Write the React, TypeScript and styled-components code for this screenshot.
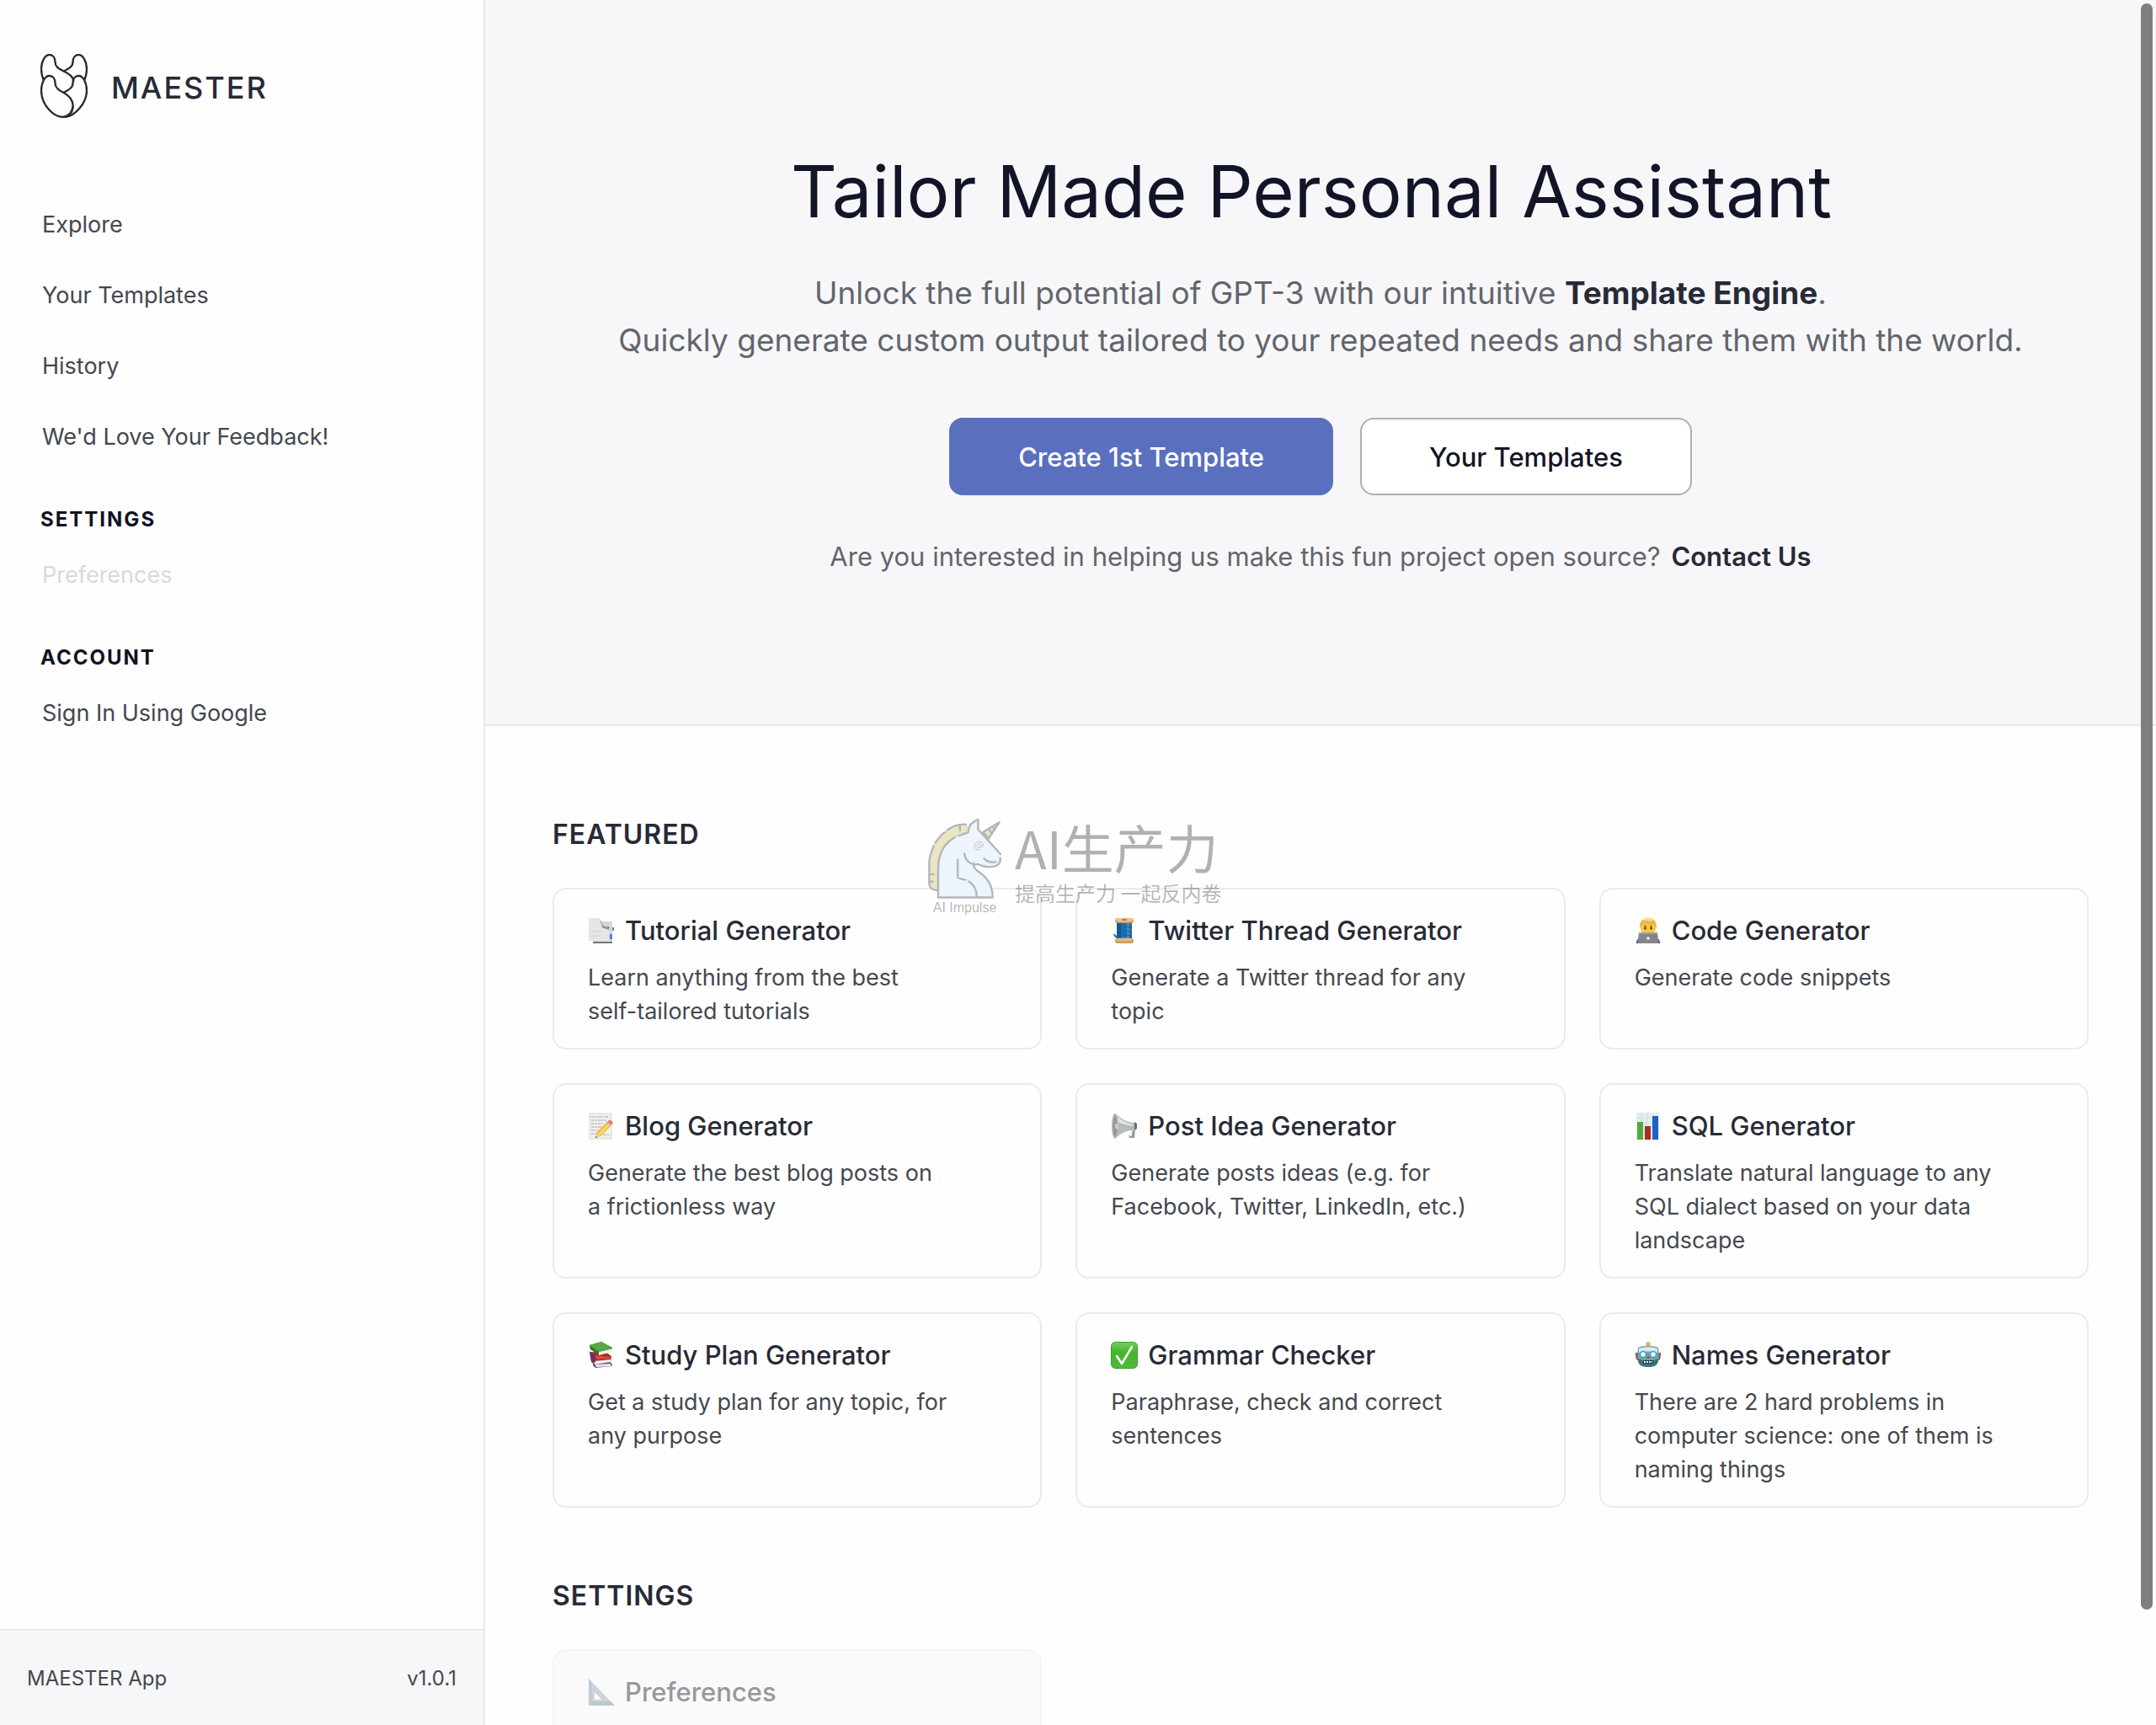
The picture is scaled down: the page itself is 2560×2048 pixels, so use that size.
import React from 'react';
import styled, { createGlobalStyle } from 'styled-components';

const GlobalStyle = createGlobalStyle`
  *, *::before, *::after { box-sizing: border-box; }
  html, body { margin: 0; height: 100%; }
  body {
    overflow: hidden;
    background: #fefefe;
    color: #272a36;
    font-family: Inter, 'Noto Sans CJK SC', sans-serif;
    -webkit-font-smoothing: antialiased;
  }
  h1, h2, h3, p, ul { margin: 0; padding: 0; }
  ul { list-style: none; }
  a { color: inherit; text-decoration: none; }
  button { font: inherit; cursor: pointer; }
`;

const Shell = styled.div`
  display: flex;
  height: 100vh;
`;

/* ---------- sidebar ---------- */

const Sidebar = styled.aside`
  display: flex;
  flex-direction: column;
  flex: 0 0 576px;
  border-right: 2px solid #e8e9eb;
`;

const Brand = styled.a`
  display: flex;
  align-items: center;
  gap: 28px;
  padding: 64px 48px 0;
`;

const BrandName = styled.span`
  padding-top: 4px;
  font-size: 36px;
  line-height: 48px;
  font-weight: 500;
  letter-spacing: 2px;
`;

const Nav = styled.nav`
  flex: 1;
  padding: 85px 48px 0;
`;

const NavHeading = styled.h2`
  margin-top: 32px;
  font-size: 24px;
  line-height: 48px;
  font-weight: 700;
  letter-spacing: 2px;
  color: #101322;
`;

const NavLink = styled.a<{ $muted?: boolean }>`
  display: block;
  padding: 0 2px;
  font-size: 27px;
  line-height: 84px;
  color: ${(p) => (p.$muted ? '#d9d9da' : '#44474e')};
`;

const SidebarFooter = styled.footer`
  display: flex;
  align-items: center;
  justify-content: space-between;
  height: 114px;
  padding: 0 32px;
  border-top: 2px solid #e8e9eb;
  background: #f7f7fa;
  font-size: 24px;
  color: #44474e;
`;

/* ---------- hero ---------- */

const Main = styled.main`
  position: relative;
  flex: 1;
  min-width: 0;
  overflow-y: auto;
  scrollbar-width: none;
`;

const Hero = styled.section`
  display: flex;
  flex-direction: column;
  align-items: center;
  padding: 180px 80px 175px;
  border-bottom: 2px solid #e8e9eb;
  background: #f7f7fa;
  text-align: center;
`;

const HeroTitle = styled.h1`
  padding-right: 22px;
  font-size: 85px;
  line-height: 96px;
  font-weight: 400;
  color: #121527;
`;

const HeroText = styled.p`
  margin-top: 44px;
  font-size: 37px;
  line-height: 56px;
  color: #62656b;

  strong {
    font-weight: 700;
    color: #272a36;
  }
`;

const Actions = styled.div`
  display: flex;
  gap: 32px;
  margin-top: 64px;
`;

const ActionButton = styled.button<{ $primary?: boolean }>`
  height: 92px;
  padding: 0 80px;
  border: 2px solid ${(p) => (p.$primary ? '#5a70bf' : '#b0b0b1')};
  border-radius: 16px;
  background: ${(p) => (p.$primary ? '#5a70bf' : '#fff')};
  color: ${(p) => (p.$primary ? '#fff' : '#121527')};
  font-size: 31px;
  font-weight: 500;
`;

const ContactLine = styled.p`
  margin-top: 49px;
  font-size: 31px;
  line-height: 48px;
  color: #62656b;

  a {
    margin-left: 4px;
    font-weight: 600;
    color: #272a36;
  }
`;

/* ---------- card grid ---------- */

const Content = styled.div`
  padding: 24px 80px 80px;
`;

const Section = styled.section`
  padding-top: 80px;
`;

const SectionTitle = styled.h2`
  margin-bottom: 38px;
  font-size: 32px;
  line-height: 50px;
  font-weight: 600;
  letter-spacing: 1px;
`;

const Grid = styled.ul`
  display: grid;
  grid-template-columns: repeat(3, minmax(0, 1fr));
  gap: 40px;
`;

const Card = styled.li<{ $muted?: boolean }>`
  min-height: 192px;
  padding: 25px 40px 23px;
  border: 2px solid ${(p) => (p.$muted ? '#f5f5f6' : '#ebebec')};
  border-radius: 16px;
  background: ${(p) => (p.$muted ? '#fafafa' : '#fefefe')};
  color: ${(p) => (p.$muted ? '#97989b' : '#272a36')};

  svg {
    opacity: ${(p) => (p.$muted ? 0.5 : 1)};
  }
`;

const CardTitle = styled.h3`
  display: flex;
  align-items: center;
  gap: 12px;
  font-size: 31px;
  line-height: 48px;
  font-weight: 500;
`;

const CardText = styled.p`
  max-width: 432px;
  margin-top: 12px;
  font-size: 27px;
  line-height: 40px;
  white-space: pre-line;
  color: #45484f;
`;

/* ---------- overlays ---------- */

const ScrollThumb = styled.div`
  position: fixed;
  top: 4px;
  right: 4px;
  width: 14px;
  height: 93.1%;
  border-radius: 8px;
  background: #7f7f80;
`;

const Watermark = styled.div`
  position: absolute;
  top: 970px;
  left: 524px;
  display: flex;
  gap: 14px;
  color: rgba(0, 0, 0, 0.3);
  pointer-events: none;
`;

const WatermarkMark = styled.div`
  display: flex;
  flex-direction: column;
  align-items: center;
  font: 16px/20px 'Liberation Sans', sans-serif;
`;

const WatermarkName = styled.div`
  font: 400 62px/70px 'Noto Sans CJK SC', sans-serif;
`;

const WatermarkTagline = styled.div`
  font: 400 24px/40px 'Noto Sans CJK SC', sans-serif;
`;

/* ---------- drawings ---------- */

const Logo = () => (
  <svg width="56" height="76" viewBox="0 0 56 76" fill="none" stroke="#272a33" strokeWidth="2.300" strokeLinejoin="round" aria-hidden="true">
    <path d="M4 31.5C1.500 26 1 21 1 18 1 9 5.500 1 10.500 1 15 1 17.500 4.500 17.500 9.500 17.500 15 21 17.500 27.500 20.500 35 24 39 27 39.300 33" />
    <path d="M27.500 20.500C34 17.500 38.500 15 38.500 9.500 38.500 4.500 41 1 45.500 1 50.500 1 55 9 55 18 55 21 54.500 26 52 31.500" />
    <path d="M27.500 75C15 75 1 60 1 43.500 1 34 5.500 26 10.500 26 15 26 17.500 29.500 17.500 34.500 17.500 40 21 42.500 27.500 46 36 50.500 39.500 56 38.500 64 37.500 70.500 33 74 27.500 75Z" />
    <path d="M27.500 46C34 42.500 38.500 40 38.500 34.500 38.500 29.500 41 26 45.500 26 50.500 26 55 34 55 43.500 55 57 42 75 27.500 75 35 73 38 69 38.500 62" />
  </svg>
);

const Icon = ({ children }: { children: React.ReactNode }) => (
  <svg width="32" height="32" viewBox="0 0 32 32" aria-hidden="true">
    {children}
  </svg>
);

const TabsIcon = () => (
  <Icon>
    <path d="M6 5h23v26H6z" fill="#d5d6d8" />
    <path d="M6 29h23v2H6z" fill="#777" />
    <path d="M17 11h8v4h-7z" fill="#68696b" />
    <path d="M1 1h11c4 0 3 7 5 11l8 3v13H1z" fill="#e6e6e7" />
    <path d="M12 1c4 0 3 7 5 11-1-2 4 0 8 3 0-3-3-4-6-5-3-2-2-8-7-9z" fill="#a9aaac" />
    <path d="M4 17h12M4 22h10" stroke="#cfcfd0" />
    <path d="M29 12h2v4h-2z" fill="#4a90d9" />
    <path d="M26 20h3v6h-3z" fill="#5b7be0" />
  </Icon>
);

const ThreadIcon = () => (
  <Icon>
    <path d="M7 5h18v23H7z" fill="#1d6fae" />
    <path d="M7 5h5v23H7z" fill="#14588f" />
    <path d="M19 5h3v23h-3z" fill="#3a8cc8" />
    <path d="M7 10l18 2M7 15l18 2M7 20l18 2" stroke="#1a639c" />
    <path d="M4 20c1 4 5 5 9 6" stroke="#1d6fae" strokeWidth="2" fill="none" />
    <rect x="5" y="25" width="22" height="6" rx="3" fill="#cf9a5c" />
    <ellipse cx="16" cy="26.500" rx="11" ry="2" fill="#e6b980" />
    <rect x="5" y="1" width="22" height="6" rx="3" fill="#cf9a5c" />
    <ellipse cx="16" cy="3" rx="11" ry="2.500" fill="#edc791" />
    <ellipse cx="16" cy="3" rx="3" ry="1" fill="#9c6d3a" />
  </Icon>
);

const CoderIcon = () => (
  <Icon>
    <path d="M2 31c0-4 2-6 5-7h18c3 1 5 3 5 7z" fill="#3d3fa8" />
    <rect x="7" y="2" width="18" height="19" rx="8" fill="#f7c93f" />
    <path d="M6 13C5 5 10 1 16 1s11 4 10 12l-3-5c-5 1-9 0-12-1l-3 2z" fill="#e9b44c" />
    <path d="M10 3c4-2 9-2 12 1-4 0-8 1-12-1z" fill="#ffe08a" />
    <path d="M11 10.500h3M18 10.500h3" stroke="#8a5a1c" />
    <ellipse cx="12.500" cy="13" rx="1.200" ry="1.800" fill="#4a3012" />
    <ellipse cx="19.500" cy="13" rx="1.200" ry="1.800" fill="#4a3012" />
    <path d="M5 18h22l1.500 13h-25z" fill="#848587" />
    <path d="M5 18h22v2H5z" fill="#a0a1a3" />
    <circle cx="16" cy="25" r="1.800" fill="#f4f4f4" />
  </Icon>
);

const MemoIcon = () => (
  <Icon>
    <path d="M2 1h26v30H2z" fill="#f0f0ee" stroke="#d8d8d6" />
    <path d="M4 5h20M4 9h18M4 13h14M4 17h12M4 21h9M4 25h6M18 26h7" stroke="#a4a4a4" strokeDasharray="4 1 2 1" />
    <path d="M10 24L23 11l5 4-13 13-6 2z" fill="#f0b92c" />
    <path d="M12 25L25 12l2 2-13 13z" fill="#f9da6c" />
    <path d="M9 30l1-6 5 4z" fill="#e8cfa2" />
    <path d="M9 30l.5-2 1.500 1.200z" fill="#333" />
    <path d="M23 11l2-2c2-1 6 2 4 5l-1 1z" fill="#e2766f" />
    <path d="M22 12l1.500-1.500 5 4L27 16z" fill="#b8babd" />
  </Icon>
);

const MegaphoneIcon = () => (
  <Icon>
    <path d="M24 17l5 1-1 12h-6l-1-3 3-1z" fill="#8e9aa0" />
    <path d="M24 19l2 .5-1 8-3 1z" fill="#e9f1f5" />
    <path d="M5 1c8 7 14 10 21 11 3 0 4 2 4 5s-2 5-4 4c-8 0-15 4-21 10z" fill="#b9babc" />
    <path d="M8 5c6 5 12 8 18 9v2c-7-1-13-3-19-5z" fill="#e3e4e5" />
    <ellipse cx="5" cy="16" rx="4" ry="15" fill="#b4b5b7" />
    <ellipse cx="5" cy="16" rx="2.500" ry="12" fill="#97989a" />
    <path d="M5 13h4v6H5z" fill="#c9cacc" />
    <path d="M28 11l3 2v6l-3 2z" fill="#6c6d70" />
  </Icon>
);

const ChartIcon = () => (
  <Icon>
    <path d="M2 0h27v32H2z" fill="#e4edf1" />
    <path d="M2 6h27M2 12h27M2 18h27M2 24h27M8 0v32M15 0v32M22 0v32" stroke="#d3dee3" />
    <path d="M3 11h7v21H3z" fill="#4fae3a" />
    <path d="M12 16h7v16h-7z" fill="#b02a24" />
    <path d="M21 4h7v28h-7z" fill="#2160c4" />
  </Icon>
);

const BooksIcon = () => (
  <Icon>
    <path d="M6 24l18 0 5 2-1 3-19 2-3-3z" fill="#4a5c9e" />
    <path d="M9 27l18-1v3l-17 1z" fill="#e8e8ea" />
    <path d="M2 12l20 1 6 4-1 8-19 2-4-3z" fill="#a8281f" />
    <path d="M7 23l20-2v3L8 27z" fill="#efefef" />
    <path d="M2 11l6 8 1 6-5-3z" fill="#4a3a86" />
    <path d="M9 16l18 2v2l-17 1z" fill="#d8493a" />
    <path d="M2 4L16 0l13 7v4l-16 5L3 9z" fill="#2f7a2c" />
    <path d="M13 12l16-4v4l-16 4z" fill="#ececec" />
    <path d="M2 4L16 0l13 7-16 5z" fill="#5aa545" />
  </Icon>
);

const CheckIcon = () => (
  <Icon>
    <defs>
      <linearGradient id="check-fill" x1="0" y1="0" x2="0" y2="1">
        <stop offset="0" stopColor="#74cf62" />
        <stop offset="0.400" stopColor="#43b52c" />
        <stop offset="1" stopColor="#52b83c" />
      </linearGradient>
    </defs>
    <rect x="0.500" y="0.500" width="31" height="31" rx="5" fill="url(#check-fill)" stroke="#3d9a2b" />
    <path d="M7 17l6 9L25 6" fill="none" stroke="#fff" strokeWidth="2.500" strokeLinecap="round" strokeLinejoin="round" />
  </Icon>
);

const RobotIcon = () => (
  <Icon>
    <path d="M14 4h4v4h-4z" fill="#6b3b3b" />
    <circle cx="16" cy="2.800" r="2.800" fill="#f0b254" />
    <path d="M1 13h5v9H3c-2-2-2-6-2-9zM31 13h-5v9h3c2-2 2-6 2-9z" fill="#9a4b46" />
    <path d="M4 7c6-3 18-3 24 0 1 6 1 11 0 17-3 7-21 7-24 0-1-6-1-11 0-17z" fill="#6fa3ab" />
    <path d="M5 8c6-2.500 16-2.500 22 0v5c-7-2-15-2-22 0z" fill="#dce9ec" />
    <path d="M4 20c6 3 18 3 24 0 0 8-4 10-12 10S4 28 4 20z" fill="#3b747d" />
    <circle cx="10" cy="15" r="3.500" fill="#e9fbff" stroke="#31a5b4" strokeWidth="1.500" />
    <circle cx="22" cy="15" r="3.500" fill="#e9fbff" stroke="#31a5b4" strokeWidth="1.500" />
    <path d="M16 16l2.500 4h-5z" fill="#b5533c" />
    <path d="M10 22h12v4H10z" fill="#1f3f45" />
    <path d="M11 24h10" stroke="#e8f3f5" strokeWidth="2" strokeDasharray="2 1" />
  </Icon>
);

const SetSquareIcon = () => (
  <Icon>
    <path fillRule="evenodd" d="M1 0l31 32H1zM8 16v9h9z" fill="#9fb2c0" />
    <path d="M1 27h26l5 5H1z" fill="#7f95a5" />
    <path d="M1 0l4 4v28H1z" fill="#8b9fae" />
  </Icon>
);

const Unicorn = () => (
  <svg width="91" height="98" viewBox="60 60 274 294" fill="none" stroke="#b2b5bb" strokeWidth="7" strokeLinecap="round" strokeLinejoin="round" aria-hidden="true">
    <path d="M208 90C140 80 70 140 71 220v75c0 16 12 28 30 30V240c2-60 36-104 106-124z" fill="#e9e6c0" stroke="none" />
    <path d="M202 86c-24-2-48 6-68 20M126 114c-14 10-26 24-34 38M86 164c-10 20-16 40-16 62v68c0 16 10 26 28 28M180 92v16M72 264h14M72 290h12" />
    <path d="M101 347V245c0-62 36-108 110-128-2-20 10-40 33-50v38l84 88c4 22-4 44-32 44-20 0-34-4-50-14-14 0-18 10-14 22 22 22 64 46 64 102z" fill="#edf4fb" stroke="none" />
    <path d="M325 192l-80-88V68c-22 8-36 22-35 46l-34 12M162 132c-40 22-60 60-60 112v103h195c0-50-26-76-50-92-12-8-20-18-18-30M196 190c2 26 26 44 48 38 16 8 36 12 54 9 18-2 28-14 26-30M266 208c12 12 28 14 42 12M172 212v64c10 4 20 8 28 8M212 290c18 12 28 30 28 54" />
    <path d="M262 114l59-36-38 58z" fill="#e9e6c0" />
    <path d="M282 102l12 16M296 94l8 12" />
    <path d="M254 168c-6 4-13 0-12-8 1-7 11-8 12 0v4c3 5 9 3 9-4 0-8-7-13-15-13-9 0-16 6-16 15 0 10 8 16 18 15" strokeWidth="2.500" />
  </svg>
);

/* ---------- data ---------- */

const features = [
  { icon: TabsIcon, title: 'Tutorial Generator', text: 'Learn anything from the best\nself-tailored tutorials' },
  { icon: ThreadIcon, title: 'Twitter Thread Generator', text: 'Generate a Twitter thread for any topic' },
  { icon: CoderIcon, title: 'Code Generator', text: 'Generate code snippets' },
  { icon: MemoIcon, title: 'Blog Generator', text: 'Generate the best blog posts on a\u00a0frictionless way' },
  { icon: MegaphoneIcon, title: 'Post Idea Generator', text: 'Generate posts ideas (e.g. for Facebook, Twitter, LinkedIn, etc.)' },
  { icon: ChartIcon, title: 'SQL Generator', text: 'Translate natural language to any SQL dialect based on your data landscape' },
  { icon: BooksIcon, title: 'Study Plan Generator', text: 'Get a study plan for any topic, for any purpose' },
  { icon: CheckIcon, title: 'Grammar Checker', text: 'Paraphrase, check and correct sentences' },
  { icon: RobotIcon, title: 'Names Generator', text: 'There are 2 hard problems in computer science: one of them is naming things' },
];

export default function App() {
  return (
    <Shell>
      <GlobalStyle />
      <Sidebar>
        <Brand href="#">
          <Logo />
          <BrandName>MAESTER</BrandName>
        </Brand>
        <Nav>
          <NavLink href="#explore">Explore</NavLink>
          <NavLink href="#templates">Your Templates</NavLink>
          <NavLink href="#history">History</NavLink>
          <NavLink href="#feedback">We'd Love Your Feedback!</NavLink>
          <NavHeading>SETTINGS</NavHeading>
          <NavLink $muted href="#preferences" aria-disabled="true">Preferences</NavLink>
          <NavHeading>ACCOUNT</NavHeading>
          <NavLink href="#sign-in">Sign In Using Google</NavLink>
        </Nav>
        <SidebarFooter>
          <span>MAESTER App</span>
          <span>v1.0.1</span>
        </SidebarFooter>
      </Sidebar>

      <Main>
        <Hero>
          <HeroTitle>Tailor Made Personal Assistant</HeroTitle>
          <HeroText>
            Unlock the full potential of GPT-3 with our intuitive <strong>Template Engine</strong>.
            <br />
            Quickly generate custom output tailored to your repeated needs and share them with the world.
          </HeroText>
          <Actions>
            <ActionButton type="button" $primary>Create 1st Template</ActionButton>
            <ActionButton type="button">Your Templates</ActionButton>
          </Actions>
          <ContactLine>
            Are you interested in helping us make this fun project open source? <a href="#contact">Contact Us</a>
          </ContactLine>
        </Hero>

        <Content>
          <Section>
            <SectionTitle>FEATURED</SectionTitle>
            <Grid>
              {features.map(({ icon: FeatureIcon, title, text }) => (
                <Card key={title}>
                  <CardTitle>
                    <FeatureIcon />
                    {title}
                  </CardTitle>
                  <CardText>{text}</CardText>
                </Card>
              ))}
            </Grid>
          </Section>
          <Section>
            <SectionTitle>SETTINGS</SectionTitle>
            <Grid>
              <Card $muted>
                <CardTitle>
                  <SetSquareIcon />
                  Preferences
                </CardTitle>
              </Card>
            </Grid>
          </Section>
        </Content>

        <Watermark>
          <WatermarkMark>
            <Unicorn />
            AI Impulse
          </WatermarkMark>
          <div>
            <WatermarkName>AI生产力</WatermarkName>
            <WatermarkTagline>提高生产力 一起反内卷</WatermarkTagline>
          </div>
        </Watermark>
      </Main>
      <ScrollThumb aria-hidden="true" />
    </Shell>
  );
}
